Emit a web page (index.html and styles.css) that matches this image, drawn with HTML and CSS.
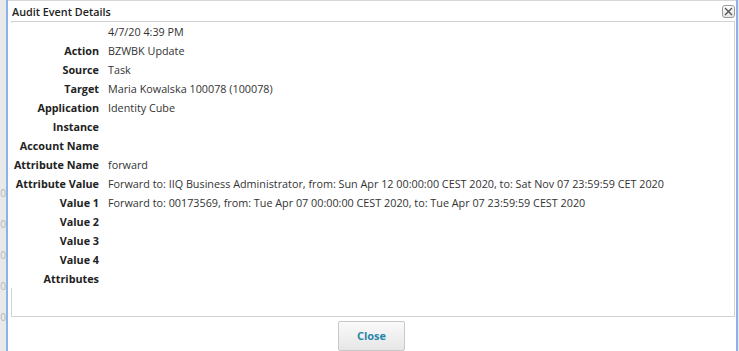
FILE: index.html
```html
<!DOCTYPE html>
<html lang="en">
<head>
    <meta charset="UTF-8">
    <title>Audit Event Details</title>
<link rel="stylesheet" href="styles.css">
</head>
<body>
<div class="page">
    <div class="backdrop">
        <span>20</span><span>20</span><span>20</span><span>20</span><span>20</span>
    </div>
    <div class="dialog">
        <div class="dialog-header">
            <span class="dialog-title">Audit Event Details</span>
            <button class="dialog-close" title="Close">
                <svg width="9" height="9" viewBox="0 0 9 9"><path d="M1 1L8 8M8 1L1 8" stroke="#555" stroke-width="1.4"/></svg>
            </button>
        </div>
        <div class="dialog-body">
            <table class="details">
                <tr><th></th><td>4/7/20 4:39 PM</td></tr>
                <tr><th>Action</th><td>BZWBK Update</td></tr>
                <tr><th>Source</th><td>Task</td></tr>
                <tr><th>Target</th><td>Maria Kowalska 100078 (100078)</td></tr>
                <tr><th>Application</th><td>Identity Cube</td></tr>
                <tr><th>Instance</th><td></td></tr>
                <tr><th>Account Name</th><td></td></tr>
                <tr><th>Attribute Name</th><td>forward</td></tr>
                <tr><th>Attribute Value</th><td>Forward to: IIQ Business Administrator, from: Sun Apr 12 00:00:00 CEST 2020, to: Sat Nov 07 23:59:59 CET 2020</td></tr>
                <tr><th>Value 1</th><td>Forward to: 00173569, from: Tue Apr 07 00:00:00 CEST 2020, to: Tue Apr 07 23:59:59 CEST 2020</td></tr>
                <tr><th>Value 2</th><td></td></tr>
                <tr><th>Value 3</th><td></td></tr>
                <tr><th>Value 4</th><td></td></tr>
                <tr><th>Attributes</th><td></td></tr>
            </table>
        </div>
        <div class="dialog-footer">
            <button class="btn">Close</button>
        </div>
    </div>
</div>
</body>
</html>
```

FILE: styles.css
```css
body {
    margin: 0;
    background: #e9e9e9;
    font-family: "Open Sans", "Liberation Sans", sans-serif;
    font-size: 10.8px;
    color: #222;
    overflow: hidden;
}
.page {
    display: flex;
    height: 351px;
}
.backdrop {
    width: 6px;
    overflow: hidden;
    display: flex;
    flex-direction: column;
    padding-top: 187px;
    gap: 19px;
    color: #b5b5b5;
    font-size: 10px;
    direction: rtl;
}
.backdrop span {
    display: block;
    line-height: 12px;
}
.dialog {
    width: 728px;
    height: 351px;
    background: #fff;
    border-left: 2px solid #8eb1ea;
    border-right: 2px solid #8eb1ea;
    display: flex;
    flex-direction: column;
}
.dialog-header {
    height: 21px;
    display: flex;
    align-items: center;
    justify-content: space-between;
    padding: 0 1px 0 4px;
    border-top: 1px solid #d6d6d6;
    box-sizing: border-box;
}
.dialog-title {
    font-weight: 600;
    font-size: 10.8px;
    color: #222;
    margin-top: 1px;
}
.dialog-close {
    width: 13px;
    height: 13px;
    padding: 0;
    border: 1px solid #9a9a9a;
    border-radius: 3px;
    background: linear-gradient(#fdfdfd, #e4e4e4);
    display: flex;
    align-items: center;
    justify-content: center;
    margin-top: 1px;
}
.dialog-body {
    height: 297px;
    margin: 0 1px 0 3px;
    border: 1px solid #d3d3d3;
    box-sizing: border-box;
    padding-top: 1px;
}
.details {
    border-collapse: collapse;
    background: #fff;
    margin-left: -1px;
    position: relative;
}
.details th {
    width: 88px;
    padding: 0 9px 0 0;
    text-align: right;
    font-weight: 700;
    white-space: nowrap;
    height: 19px;
    color: #222;
}
.details td {
    padding: 0;
    height: 19px;
    white-space: nowrap;
    color: #333;
}
.details tr:first-child th,
.details tr:first-child td {
    height: 18px;
}
.dialog-footer {
    display: flex;
    justify-content: center;
    padding-top: 4px;
    padding-right: 1px;
}
.btn {
    width: 67px;
    height: 30px;
    border: 1px solid #c8c8c8;
    border-radius: 2px;
    background: linear-gradient(#fafafa, #e6e6e6);
    color: #2a86a8;
    font-family: "Open Sans", "Liberation Sans", sans-serif;
    font-weight: 700;
    font-size: 11px;
    padding-bottom: 3px;
}
```
